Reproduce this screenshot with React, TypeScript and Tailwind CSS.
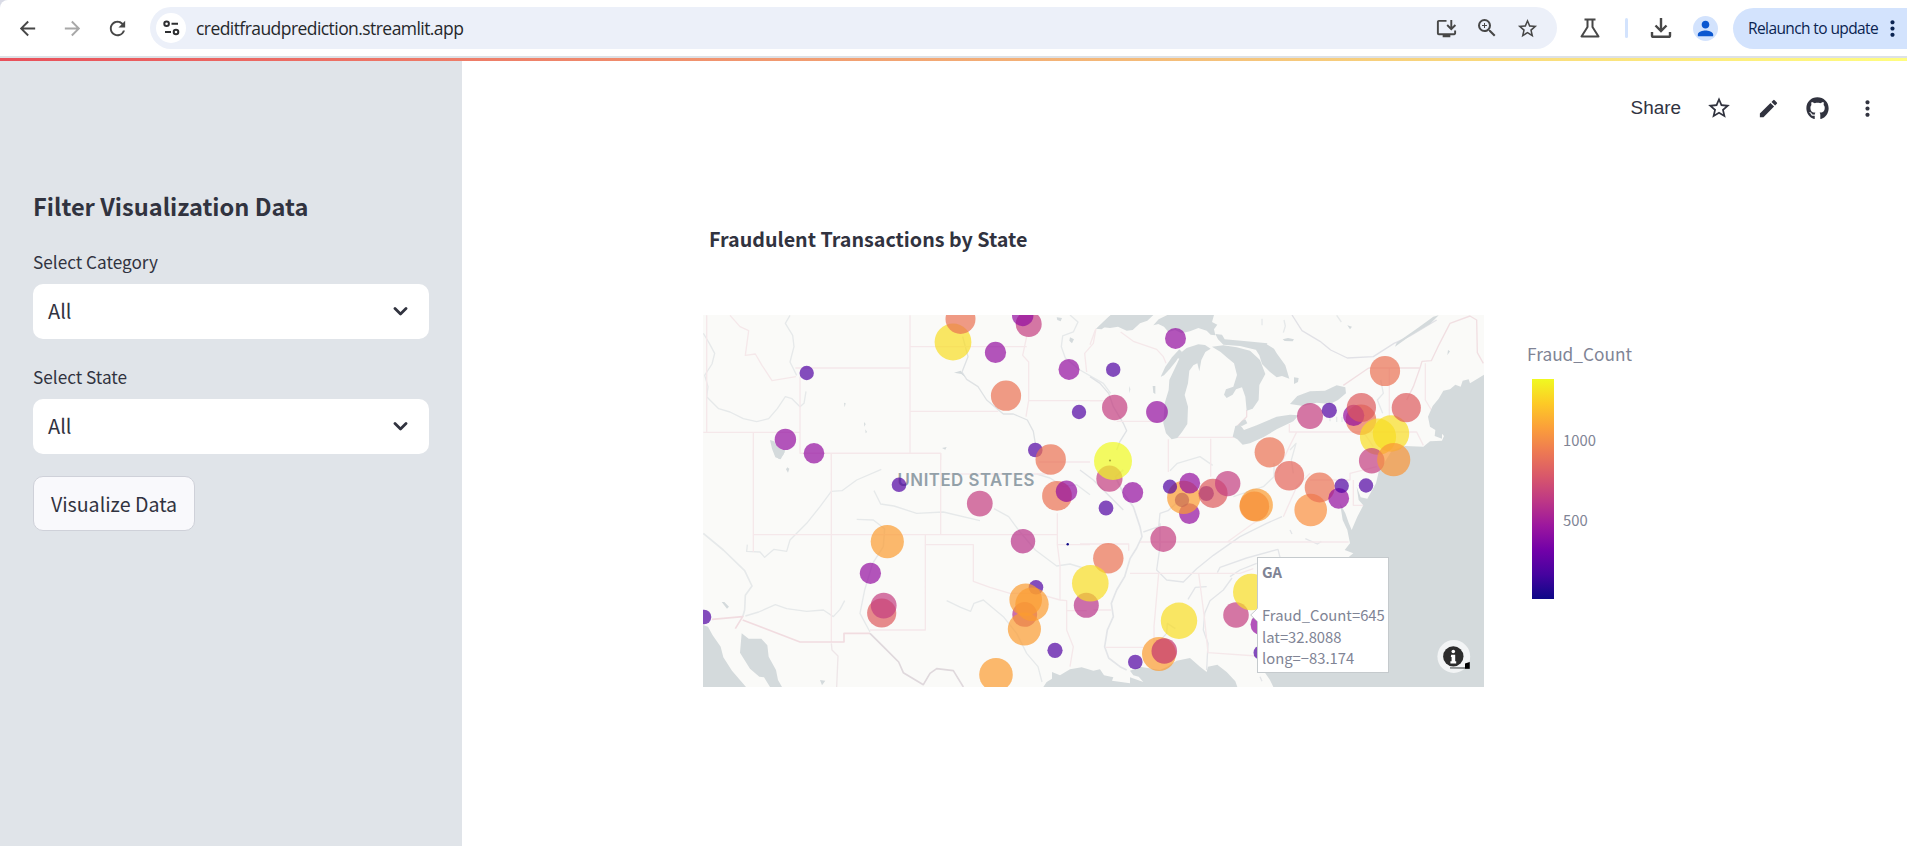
import React from "react";
import { FaGithub } from "react-icons/fa";
import {
  MdArrowBack,
  MdRefresh,
  MdOutlineInstallDesktop,
  MdZoomIn,
  MdStarOutline,
  MdPerson,
  MdEdit,
  MdMoreVert,
} from "react-icons/md";

const SANS = "font-['Noto_Sans_CJK_SC','Noto_Sans',sans-serif]";

const INDIGO = "#5002a2";
const PURPLE = "#930d9f";
const MAGENTA = "#b83289";
const PINK = "#c33d80";
const RED = "#dd5a5c";
const SALMON = "#ea7052";
const ORANGE = "#fb9b30";
const AMBER = "#f78d35";
const YELLOW = "#f8dd24";
const LEMON = "#f0f921";

type Bubble = [number, number, number, string];

const bubbles: Bubble[] = [
  [953, 342, 18.4, YELLOW],
  [960.5, 319, 15, SALMON],
  [1028.7, 324, 13, PINK],
  [1022.7, 315.5, 10.7, PURPLE],
  [995.5, 352.4, 10.6, PURPLE],
  [806.7, 373, 7.2, INDIGO],
  [1069, 369.4, 10.5, PURPLE],
  [1113.2, 369.7, 7.2, INDIGO],
  [1006, 395.7, 15.1, SALMON],
  [1079, 412, 7.2, INDIGO],
  [1114.7, 407.5, 12.7, PINK],
  [1157, 412, 10.9, PURPLE],
  [1175.5, 338.4, 10.5, PURPLE],
  [785.4, 439.4, 10.7, PURPLE],
  [814, 453.3, 10.3, PURPLE],
  [1035.3, 450, 7.3, INDIGO],
  [1050.7, 459.5, 15.2, SALMON],
  [1109.4, 478.7, 13.1, PINK],
  [1113, 460.9, 19, LEMON],
  [1132.7, 492.6, 10.5, PURPLE],
  [1106, 508, 7.4, INDIGO],
  [899, 484.8, 7.3, INDIGO],
  [979.8, 503.6, 12.9, PINK],
  [1057, 495.9, 14.9, SALMON],
  [1066.5, 491.2, 10.7, PURPLE],
  [1023, 541.2, 12.2, MAGENTA],
  [887.3, 541.6, 16.6, ORANGE],
  [870.4, 573.3, 10.6, PURPLE],
  [881.7, 613, 14.6, RED],
  [883.7, 605.6, 12.9, PINK],
  [704, 617, 7.3, INDIGO],
  [1067.7, 544.3, 1.2, "#0d0887"],
  [1036, 587.3, 7.3, INDIGO],
  [1024.7, 614.4, 12.4, MAGENTA],
  [1024.4, 629, 16.6, ORANGE],
  [1025.7, 599.7, 16.3, ORANGE],
  [1032, 604.3, 16.7, ORANGE],
  [1055, 650.3, 7.6, INDIGO],
  [996, 674.7, 16.8, ORANGE],
  [1086.3, 605.3, 12.5, MAGENTA],
  [1108.3, 558.3, 15.2, SALMON],
  [1090.3, 583.3, 18.3, YELLOW],
  [1163.3, 539, 12.9, PINK],
  [1189.3, 513.6, 10.3, PURPLE],
  [1182, 500, 7.2, INDIGO],
  [1183.7, 497.4, 16.6, ORANGE],
  [1170, 486.7, 7.1, INDIGO],
  [1189.7, 483.2, 10.4, PURPLE],
  [1206.4, 493.4, 7.5, INDIGO],
  [1213, 493.3, 14.6, RED],
  [1227.7, 483.6, 12.7, PINK],
  [1256.3, 505, 16.6, ORANGE],
  [1254.3, 506.3, 14.8, AMBER],
  [1310.7, 510, 16.3, "#f98e3f"],
  [1319.7, 487.5, 15, SALMON],
  [1338.7, 498.4, 10.4, PURPLE],
  [1341.7, 485.8, 7.2, INDIGO],
  [1366, 485.5, 7.2, INDIGO],
  [1289.3, 475.7, 14.8, "#e4645a"],
  [1269.7, 452.3, 15.1, SALMON],
  [1310, 416, 13, PINK],
  [1329.3, 410.4, 7.6, INDIGO],
  [1361, 419.7, 15.2, SALMON],
  [1353.7, 415.4, 10.6, PURPLE],
  [1361.4, 407.5, 14.6, RED],
  [1378, 436.7, 18.1, YELLOW],
  [1391, 433.5, 18.2, YELLOW],
  [1406.3, 407.7, 14.6, RED],
  [1385, 371, 15.1, SALMON],
  [1371.7, 460.7, 12.8, PINK],
  [1393.7, 459.7, 16.6, "#f99538"],
  [1179, 620.7, 18.2, YELLOW],
  [1236, 615, 12.8, PINK],
  [1251.3, 592, 18.3, YELLOW],
  [1261, 624.5, 10.5, PURPLE],
  [1260.8, 652.7, 7.3, INDIGO],
  [1135.3, 662, 7.3, INDIGO],
  [1159, 654, 17, ORANGE],
  [1164.3, 651, 12.8, "#c4346f"],
];

function Water() {
  return (
    <g fill="#d4dadc">
      <g transform="translate(1090 300) scale(.33333)">
        <path d="M20 86 L40 66 L62 45 H190 L172 62 L150 70 L128 90 L110 92 L84 80 L60 84 L40 82Z" />
        <path d="M190 76 L206 58 L232 45 H372 L366 66 L382 74 L372 88 L376 106 L362 104 L350 92 L325 84 L300 94 L275 100 L255 90 L235 96 L222 80 L205 72Z" />
        <path d="M256 172 L290 144 L325 133 L345 135 L362 146 L346 156 L334 180 L328 214 L322 190 L310 196 L298 212 L294 250 L284 285 L294 320 L292 372 L276 396 L262 414 L245 418 L228 400 L220 370 L224 310 L236 270 L238 240 L254 206 L268 176Z" />
        <path d="M212 230 L226 200 L246 172 L268 148 L276 156 L258 184 L240 206 L222 226Z" />
        <path d="M366 140 L400 136 L440 142 L480 152 L510 180 L526 222 L508 255 L506 300 L488 326 L470 332 L466 290 L456 262 L438 268 L428 284 L410 294 L402 284 L408 268 L430 260 L441 225 L432 190 L410 172 L392 156Z" />
        <path d="M498 150 L530 133 L552 146 L560 160 L586 196 L598 236 L576 228 L560 232 L540 216 L516 192 L508 166Z" />
        <path d="M376 102 L396 104 L404 118 L470 124 L532 130 L526 148 L500 150 L450 138 L400 134 L384 118Z" />
        <path d="M612 232 l14 2 l-2 12 l-12 6z M578 118 l16 -4 l18 4 l-4 6 l-24 -1z M772 76 l14 4 l-6 8z M188 258 h8 v24 l-6 -4z M118 258 l3 10 l-3 12z" />
        <path d="M456 362 l10 -4 l6 12 l-16 8 l-12 -2z" />
        <path d="M428 410 L436 378 L450 374 L462 390 L500 376 L560 350 L600 344 L626 346 L610 364 L560 388 L520 412 L480 430 L458 434 L442 418Z" />
        <path d="M600 312 L622 288 L660 274 L705 272 L740 256 L766 262 L768 280 L744 300 L720 312 L680 308 L640 318Z" />
        <path d="M1182 224 L1160 238 L1140 250 L1136 238 L1118 242 L1112 260 L1096 254 L1080 268 L1060 272 L1046 296 L1028 318 L1014 350 L1020 380 L1036 390 L1034 408 L1056 416 L1056 398 L1048 392 L1062 408 L1056 422 L1020 424 L1000 440 L945 438 L905 452 L882 490 L866 516 L858 550 L832 596 L812 592 L800 560 L806 600 L820 616 L802 650 L785 690 L776 668 L766 640 L750 610 L758 660 L772 690 L780 730 L764 750 L790 760 L740 800 L640 850 L530 980 L525 1118 L540 1140 L550 1161 H1182Z" />
        <path d="M1030 50 L1046 46 L1020 72 L960 108 L915 140 L920 128 L975 90Z M1074 150 l6 4 l-8 12z" />
      </g>
      <g transform="translate(1080 480) scale(.33333)">
        <path d="M-110 621 L-100 606 L-84 596 L-84 576 L-60 586 L-30 568 L5 562 L40 572 L60 568 L72 586 L100 592 L96 602 L150 610 L150 592 L190 606 L176 590 L160 586 L150 572 L180 560 L240 570 L262 560 L290 542 L330 534 L360 560 L380 576 L384 560 L412 554 L440 576 L466 604 L472 621Z" />
      </g>
      <g transform="translate(690 450) scale(.33333)">
        <path d="M39 525 L54 530 L68 556 L92 590 L100 622 L126 662 L168 711 H39Z" />
        <path d="M155 550 L176 566 L214 566 L232 586 L236 620 L258 660 L264 690 L276 711 H240 L222 682 L208 680 L180 656 L150 608Z" />
        <path d="M95 456 l8 0 l14 14 l-6 6z M292 52 l6 4 l-4 12 l-6 -10z M390 690 l16 2 l-10 14z" />
        <path d="M250 0 h36 l-6 14 l-12 14 l-12 -10z" />
      </g>
      <g transform="translate(690 210) scale(.33333)">
        <path d="M1218 356 L1262 315 H1260 V340 L1235 358Z M1100 322 l16 2 l-4 10 l-10 -4z M1140 382 l12 6 l-6 12 l-8 -8z M240 690 L252 694 L262 710 L284 726 L272 748 L256 742 L246 716Z M792 488 l20 -6 l14 20 l-12 -10z M462 578 l5 2 l-3 12z M522 636 l5 6 l-4 8z M526 658 l5 8 l-4 4z M756 714 l14 -3 l-4 8z" />
      </g>
    </g>
  );
}

function Rivers() {
  return (
    <g fill="none" stroke="#e6e9ea" strokeWidth="4" strokeLinejoin="round">
      <g transform="translate(690 210) scale(.33333)">
        <path d="M40 370 L58 400 L74 430 L66 462 L44 496 L54 530 L50 560 L86 596 L120 606 L160 626 L200 635 L236 626 L262 596 L286 560 L306 566 L330 590 L342 580 L348 544 M300 316 L286 340 L308 376 L312 410 L300 456 L320 496" />
        <path d="M818 380 L834 440 L816 486 L830 508 L864 530 L890 570 L940 612 L970 612 L1012 630 L1030 664 L1036 700" stroke="#dfe2e4" />
        <path d="M1140 315 L1164 336 L1150 366 L1118 378 L1114 410 L1126 444 L1170 480 L1240 520 L1262 550" />
      </g>
      <g transform="translate(690 450) scale(.33333)">
        <path d="M40 250 L100 300 L164 362 L186 408 L166 436 L164 480 L158 500" strokeWidth="5" />
        <path d="M172 284 L170 304 L210 306 L224 322 L252 298 L290 304 L300 270 L350 220 L390 170 L424 124 L456 122 L500 90 L574 58" />
        <path d="M166 498 L206 486 L256 464 L290 476 L350 484 L400 480 L430 500 L450 478 L464 452" />
        <path d="M552 122 L572 162 L612 168 L680 190 L760 186 L870 212 M912 176 L956 200 L990 246 L1036 300 L1100 348 L1140 342 L1180 354" />
        <path d="M500 208 L550 210 L584 236 L580 290 L548 340 L524 420 L510 490 L540 546" />
        <path d="M770 452 L812 472 L842 484 L852 460 L880 450 L940 500 L980 550 L1010 610 L1044 650 L1056 696" />
        <path d="M1040 72 L1080 84 L1120 110 L1160 104 L1200 134" />
        <path d="M424 580 L426 600 L444 618 L440 711" stroke="#eee6e8" />
      </g>
      <g transform="translate(1080 480) scale(.33333)" stroke="#e3e5e8">
        <path d="M130 -30 L106 -10 L130 40 L160 80 L180 140 L186 170 L170 204 L150 236 L134 290 L110 330 L94 370 L100 410 L82 450 L74 500 L86 534 L120 560 L140 570" strokeWidth="5" />
        <path d="M190 156 L236 140 L240 100 L264 92 L300 60 M240 130 L240 200 L230 270 L260 300 L310 306 L350 266 L400 226 L480 170 L560 130 L606 110" />
        <path d="M324 358 L346 322 L380 320 M456 294 L430 330 L390 362 L374 400 L370 450 L384 490 L380 570 M450 290 L480 270 L530 250 M412 278 L420 262 L500 234 L594 208 L600 232" />
        <path d="M286 446 L262 430 L260 460 L232 490 M676 176 L712 192 L724 184 M630 150 l6 12 M540 590 l6 14" />
        <path d="M0 -30 L40 0 L100 60 L130 90" />
      </g>
      <g transform="translate(1090 300) scale(.33333)">
        <path d="M0 230 L30 250 L56 280 L70 320 L100 370 L110 392 L90 424 L80 450" stroke="#dfe2e5" />
        <path d="M606 45 L636 92 L690 124 L722 150 L772 174 L850 170 L912 130 L960 108 L1040 60" stroke="#e1e1e6" />
        <path d="M240 512 L262 490 L330 470 L368 496 M430 590 L520 560 L552 530 L552 490 M600 450 L618 430 L604 480 L610 520 M872 240 L880 280 L862 300 L878 340 M516 56 v20 M582 60 l4 18 l-6 20 M740 46 l14 20 M720 350 v14 M740 350 v16 M756 350 v16" />
      </g>
    </g>
  );
}

function Borders() {
  return (
    <g fill="none" stroke="#f5e8ea" strokeWidth="4" strokeLinejoin="round">
      <g transform="translate(690 210) scale(.33333)">
        <path d="M50 316 V667 M40 667 H330 M190 667 V750 M330 500 V730 H752 V750 M424 730 V750 M316 474 H660 M660 316 V730 M660 410 H1010 M660 604 H925 M1010 380 L998 436 L1016 456 V572 H1236 M1016 572 L1008 620" />
        <path d="M120 316 L150 350 L176 362 L166 436 L196 432 L216 466 L246 512 L318 500" />
        <path d="M1218 356 L1210 400 L1184 430 L1190 486" />
      </g>
      <g transform="translate(690 450) scale(.33333)">
        <path d="M190 0 V306 M190 254 H1102 M424 10 V576 M330 10 H752 V254 M706 254 V540 H540 M706 284 H850 V394 L900 412 L960 430 L1040 430 L1110 450 L1130 452 V540 L1150 590 L1140 650 M752 72 H1076 M1046 36 H1200 M1102 190 V284 H1200 M1102 284 L1110 346 V450 M1130 482 H1190" />
        <path d="M66 508 L158 500 L136 536 M158 510 L330 576 H462 V550 H540" stroke="#f1dce0" strokeWidth="5" />
        <path d="M540 550 L580 590 L626 636 L640 668 L700 704 L720 670 L740 656 L790 662 L820 711" stroke="#dfd8dc" strokeWidth="5" />
      </g>
      <g transform="translate(1080 480) scale(.33333)">
        <path d="M0 192 H146 V212 M180 186 H806 M150 280 H480 L520 266 M236 280 L222 440 V500 M356 280 L374 420 L384 518 L530 528 M76 502 H190 M40 390 H94 M442 186 L520 130 L570 100" />
        <path d="M820 0 V76 H850 M610 110 L650 20 L690 -20" />
      </g>
      <g transform="translate(1090 300) scale(.33333)">
        <path d="M0 134 L16 90 M92 96 L130 124 L200 148 L220 170 L228 190 M80 364 H226 M0 302 H40 M235 418 V516 M362 416 V530 M262 412 H432 M598 372 V396 H980 L1000 436 M620 396 L598 440 L560 520 M898 204 V350 M1006 190 V300 L1024 330 M660 540 H780 V520 L860 500 M820 396 L850 440" />
        <path d="M836 204 H990 L996 184 L1024 182 L1044 140 L1080 70 L1140 48 L1160 60 L1162 158 L1180 190 M990 204 L970 260 L950 300 M836 204 L760 256 M470 330 L470 350 L442 378" stroke="#f1dfe2" />
      </g>
    </g>
  );
}

function BubbleMap() {
  return (
    <svg width="781" height="372" viewBox="703 315 781 372" className="block">
      <rect x="703" y="315" width="781" height="372" fill="#fafaf8" />
      <Rivers />
      <Borders />
      <Water />
      <text
        x="897.5"
        y="485.8"
        fontSize="16.8"
        fontWeight="600"
        fill="#93a0a8"
        textLength="137"
        className="font-['Inter',sans-serif]"
      >
        UNITED STATES
      </text>
      {bubbles.map(([x, y, r, color], i) => (
        <circle key={i} cx={x} cy={y} r={r} fill={color} fillOpacity={r < 2 ? 1 : 0.7} />
      ))}
      <circle cx="1110" cy="460.5" r="1.1" fill="#a9ab3a" />
      <circle cx="1453.8" cy="656.5" r="16.4" fill="#ffffff" fillOpacity=".7" />
      <path d="M1450 662.5h15.5v4.500h-15.500z" fill="#f4f5f6" />
      <path d="M1450 667h15l4.700-5v7h-4.700l-15-.3z" fill="#8f9293" />
      <path d="M1465 663.500l4.700-1.500v6.800h-4.700z" fill="#000" />
      <circle cx="1453.300" cy="656.400" r="10.200" fill="#2c2c2c" />
      <circle cx="1453.300" cy="651.500" r="1.800" fill="#fff" />
      <path d="M1451.200 654.800h4v6.400h1v2.200h-5.800v-2.200h1.200v-4.200h-.8z" fill="#fff" />
    </svg>
  );
}

function HoverLabel() {
  return (
    <div className="absolute left-[547px] top-[242px] flex">
      <svg width="8" height="116" viewBox="0 0 8 116" className="relative z-10 -mr-px shrink-0">
        <path d="M8 51 L0.7 58 L8 65Z" fill="#fff" />
        <path d="M7.5 51.5 L0.7 58 L7.5 64.5" fill="none" stroke="#c5cacd" />
      </svg>
      <div
        className={`flex h-[116px] w-[132px] flex-col whitespace-nowrap border border-[#c5cacd] bg-white pl-1 pt-[3px] text-[14.8px] leading-[21.5px] text-[#808495] ${SANS}`}
      >
        <span className="font-bold">GA</span>
        <span className="h-[21.5px]" />
        <span>Fraud_Count=645</span>
        <span>lat=32.8088</span>
        <span>long=−83.174</span>
      </div>
    </div>
  );
}

function ColorScale() {
  return (
    <div className={`ml-[43px] mt-[26px] w-[140px] text-[#808495] ${SANS}`}>
      <div className="h-[38px] text-[17.3px] leading-[26px]">Fraud_Count</div>
      <div className="flex pl-[5px]">
        <div className="h-[220px] w-[22px] bg-[linear-gradient(to_top,#0d0887_0%,#46039f_11.1%,#7201a8_22.2%,#9c179e_33.3%,#bd3786_44.4%,#d8576b_55.6%,#ed7953_66.7%,#fb9f3a_77.8%,#fdca26_88.9%,#f0f921_100%)]" />
        <div className="flex flex-col gap-[60px] pl-[9px] pt-[51px] text-[14.8px] leading-5">
          <span>1000</span>
          <span>500</span>
        </div>
      </div>
    </div>
  );
}

function SelectField({ label, value }: { label: string; value: string }) {
  return (
    <div className="flex flex-col">
      <label className="mb-[11px] h-[23px] text-[17.2px] leading-[23px]">{label}</label>
      <div className="flex h-[55px] items-center justify-between rounded-[10px] bg-white pl-[15px] pr-[21px] text-[20px]">
        <span className="-mt-px">{value}</span>
        <svg width="15" height="10" viewBox="0 0 15 10" fill="none" stroke="#31333f" strokeWidth="2.8" strokeLinecap="round" strokeLinejoin="round">
          <path d="M2 1.5 L7.5 7 L13 1.5" />
        </svg>
      </div>
    </div>
  );
}

function BrowserBar() {
  return (
    <div className="h-14 shrink-0 bg-[#d9dbe6]">
      <header className="flex h-14 items-center overflow-hidden rounded-tl-lg bg-white text-[#474747]">
        <MdArrowBack size={23} className="ml-4 shrink-0" />
        <MdArrowBack size={23} className="ml-[22px] shrink-0 rotate-180 text-[#a8a8a8]" />
        <MdRefresh size={23} className="ml-[22px] shrink-0" />
        <div className="ml-[21px] flex h-[42px] w-[1407px] shrink-0 items-center rounded-full bg-[#ecf0f9] pl-1.5">
          <div className="flex size-[30px] shrink-0 items-center justify-center rounded-full bg-white">
            <svg width="17" height="16" viewBox="0 0 17 16" fill="none" stroke="#2e2f31" strokeWidth="2">
              <circle cx="3.6" cy="3.8" r="2.3" />
              <path d="M8.5 3.8h6.5M2 12h6" />
              <circle cx="13" cy="12" r="2.3" />
            </svg>
          </div>
          <span className="ml-[10px] mt-px text-[17.5px] tracking-[-0.56px] text-[#26282b] font-['Open_Sans',sans-serif]">
            creditfraudprediction.streamlit.app
          </span>
          <div className="ml-auto flex items-center gap-[17px] pr-[18px]">
            <MdOutlineInstallDesktop size={23} />
            <MdZoomIn size={24} />
            <MdStarOutline size={23} />
          </div>
        </div>
        <svg width="22" height="22" viewBox="0 0 22 22" fill="none" stroke="#474747" strokeWidth="2" strokeLinejoin="round" className="ml-[22px] shrink-0">
          <path d="M5.5 2.5h11M8.5 3v7L2.5 19.5h17L13.5 10V3" />
        </svg>
        <div className="ml-[24px] h-5 w-[3px] shrink-0 rounded bg-[#d3e3fd]" />
        <svg width="22" height="22" viewBox="0 0 22 22" fill="none" stroke="#474747" strokeWidth="2.4" className="ml-[22px] shrink-0">
          <path d="M11 1v12.5M5.5 8.5 11 14l5.5-5.5M2 15v3.4q0 1.4 1.4 1.4h15.2q1.4 0 1.4-1.4V15" />
        </svg>
        <div className="ml-[21px] flex size-[25px] shrink-0 items-center justify-center rounded-full bg-[#d3e3fd] text-[#0b57d0]">
          <MdPerson size={23} />
        </div>
        <div className="ml-[15px] flex h-[41px] w-[175px] shrink-0 items-center rounded-l-full rounded-r-[20px] bg-[#d3e3fd] pl-[15px] text-[#0a2351]">
          <span className="mt-px whitespace-nowrap text-[15.5px] tracking-[-0.6px] font-['Open_Sans',sans-serif]">Relaunch to update</span>
          <MdMoreVert size={25} className="ml-auto mr-[3px] shrink-0" />
        </div>
      </header>
    </div>
  );
}

export default function App() {
  return (
    <div className="flex h-[846px] w-[1907px] flex-col overflow-hidden bg-white">
      <BrowserBar />
      <div className="h-0.5 shrink-0 bg-[#dde1e6]" />
      <div className="h-[3px] shrink-0 bg-[linear-gradient(to_right,#e8505b,#f0906e_35%,#f5c47c_65%,#fffd80)]" />
      <div className="flex grow">
        <aside className={`flex w-[462px] shrink-0 flex-col bg-[#e0e4e9] px-[33px] text-[#31333f] ${SANS}`}>
          <h2 className="mb-[28px] mt-[129px] h-8 text-[23.6px] font-bold leading-8">Filter Visualization Data</h2>
          <div className="flex flex-col gap-[26px]">
            <SelectField label="Select Category" value="All" />
            <SelectField label="Select State" value="All" />
          </div>
          <button className="mt-[22px] h-[55px] w-[162px] rounded-[10px] border border-[#cfd1d9] bg-[#f9f9fc] text-[19.6px] leading-6">
            Visualize Data
          </button>
        </aside>
        <main className="flex grow flex-col">
          <div className="flex h-[94px] items-center justify-end pr-[27px] text-[#31333f]">
            <span className="mr-[25px] text-[18.9px] font-['Liberation_Sans',sans-serif]">Share</span>
            <MdStarOutline size={26} className="mr-[25px]" />
            <MdEdit size={23} className="mr-[26px]" />
            <FaGithub size={23} className="mr-[26px]" />
            <MdMoreVert size={25} />
          </div>
          <section className="ml-[241px] mt-[69px] flex flex-col">
            <h3 className={`ml-[6px] h-[30px] text-[19.7px] font-bold leading-[30px] text-[#31333f] ${SANS}`}>
              Fraudulent Transactions by State
            </h3>
            <div className="mt-[61px] flex">
              <div className="relative h-[372px] w-[781px]">
                <BubbleMap />
                <HoverLabel />
              </div>
              <ColorScale />
            </div>
          </section>
        </main>
      </div>
    </div>
  );
}
